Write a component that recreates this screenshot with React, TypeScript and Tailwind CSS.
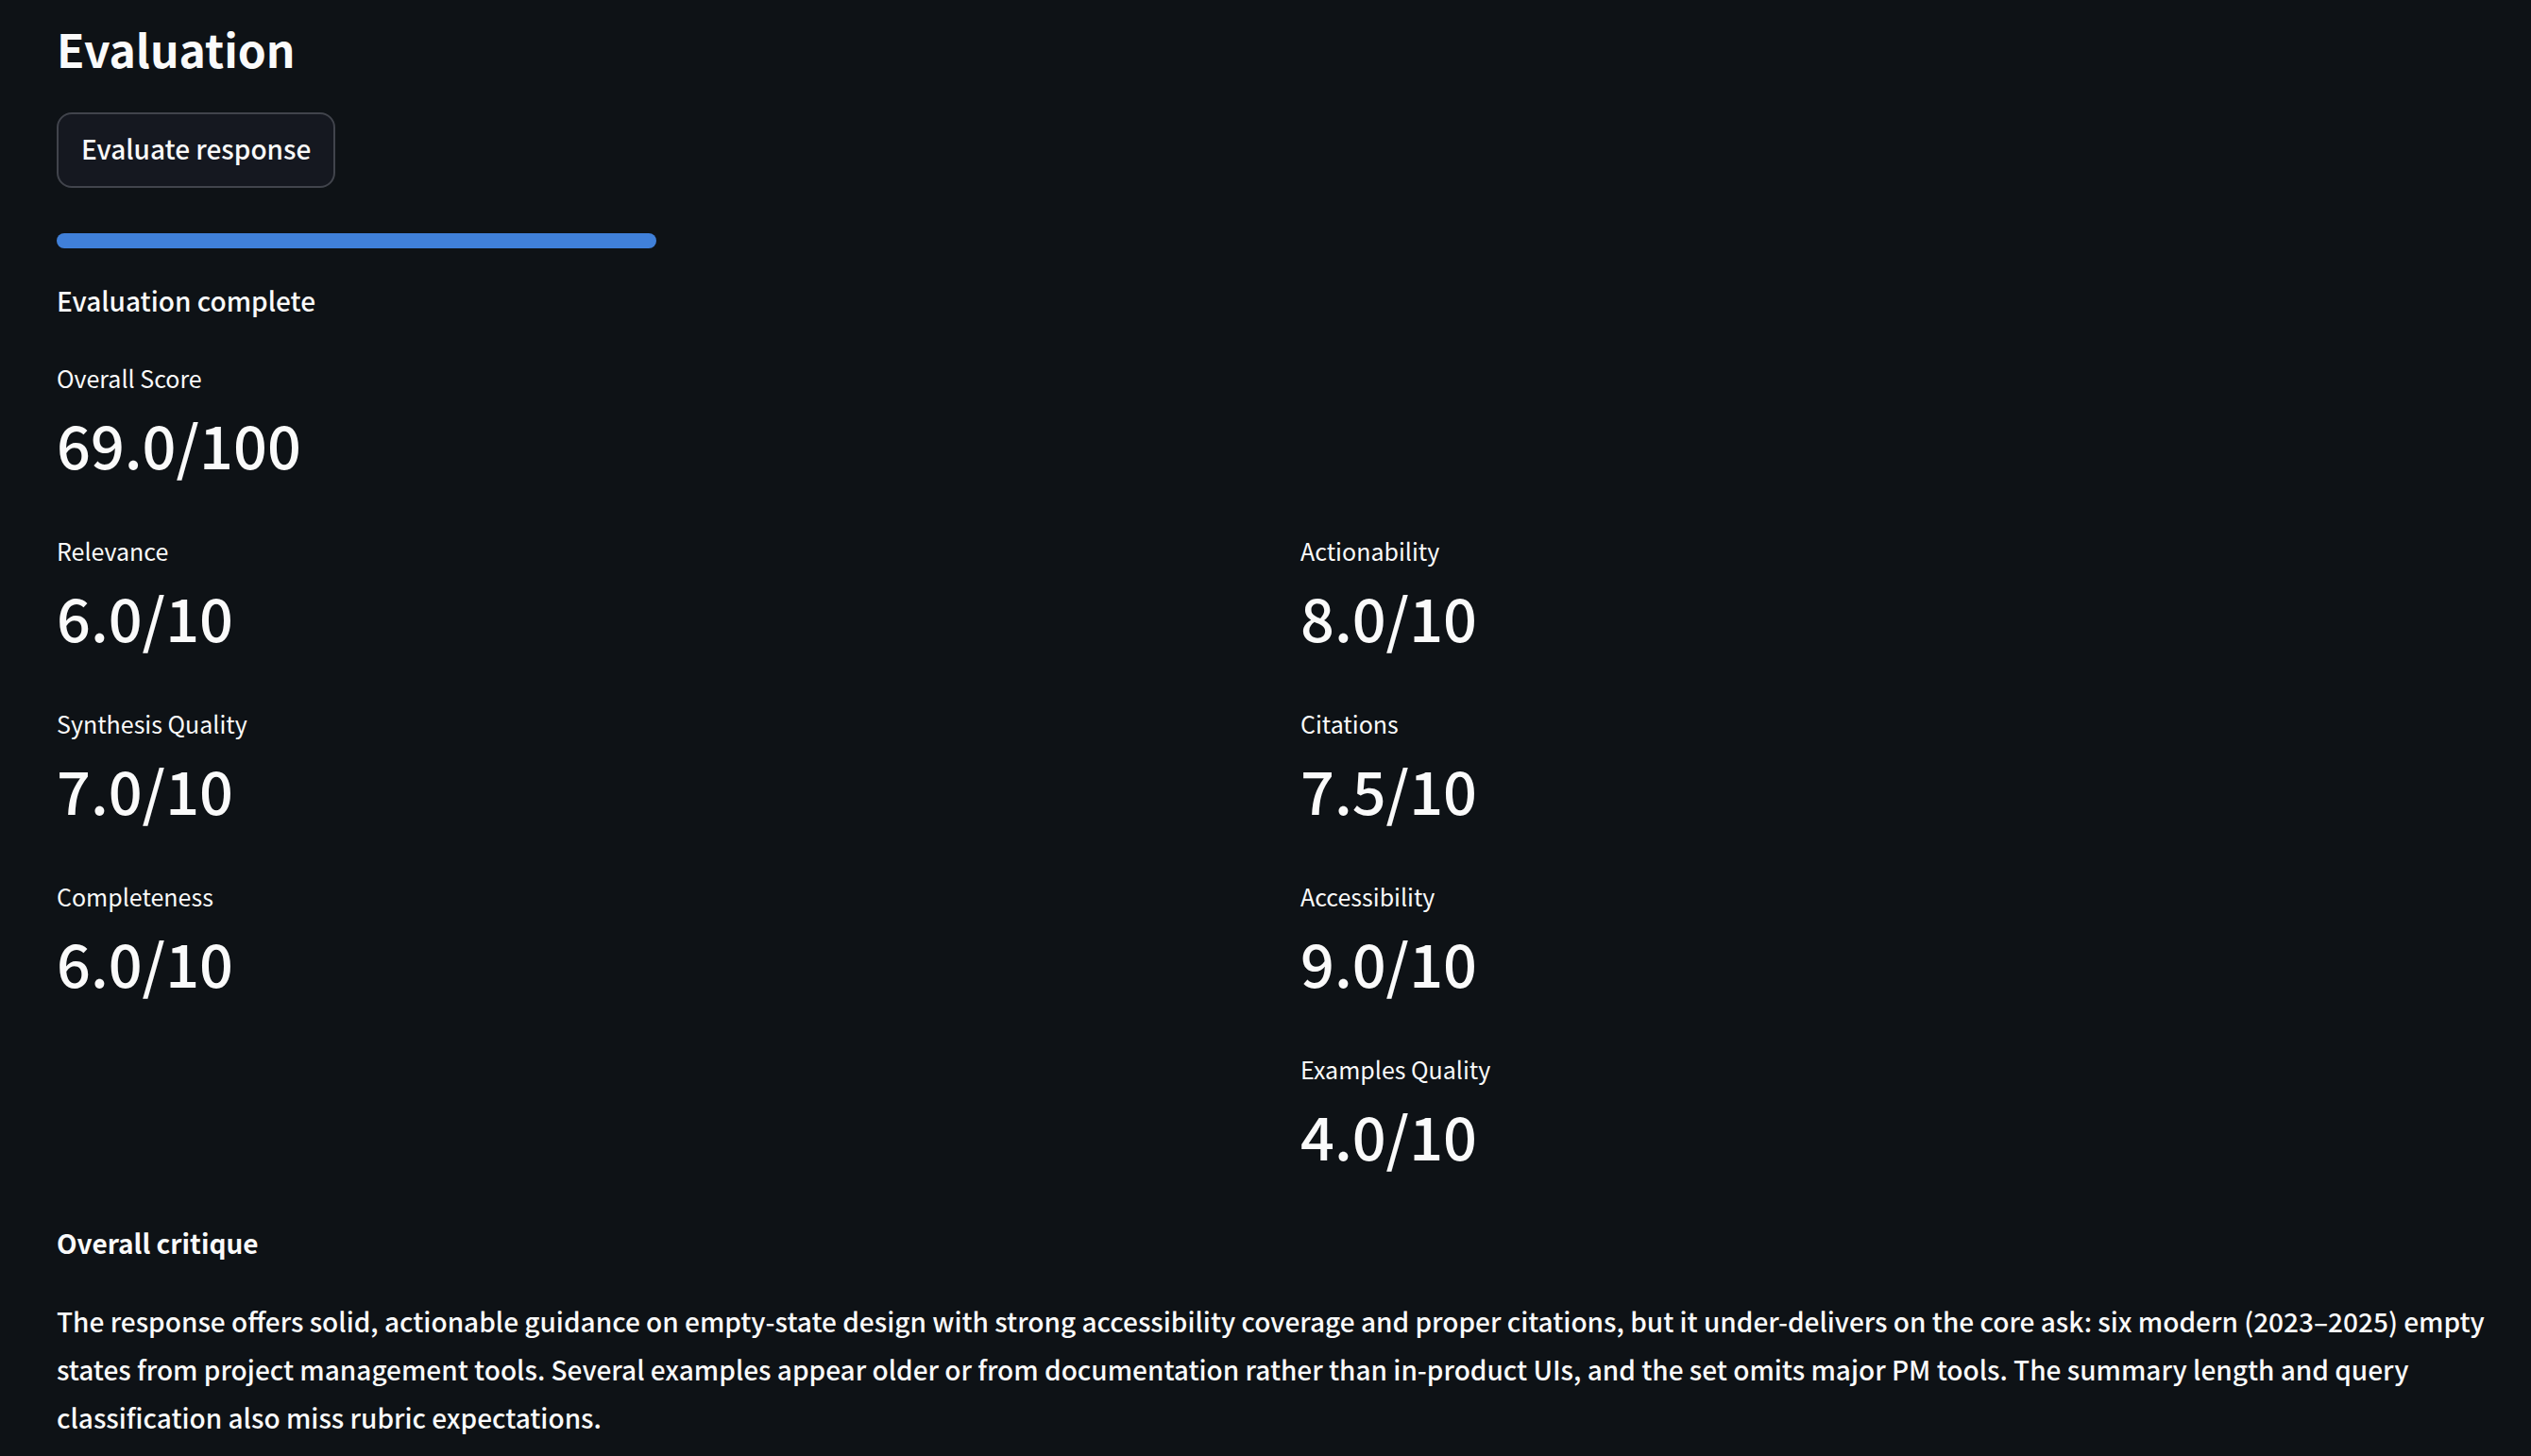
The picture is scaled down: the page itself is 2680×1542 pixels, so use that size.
import React from 'react';

type Score = { label: string; value: string };

const leftScores: Score[] = [
  { label: 'Relevance', value: '6.0/10' },
  { label: 'Synthesis Quality', value: '7.0/10' },
  { label: 'Completeness', value: '6.0/10' },
];

const rightScores: Score[] = [
  { label: 'Actionability', value: '8.0/10' },
  { label: 'Citations', value: '7.5/10' },
  { label: 'Accessibility', value: '9.0/10' },
  { label: 'Examples Quality', value: '4.0/10' },
];

function Metric({ label, value }: Score) {
  return (
    <div className="pb-3">
      <dt className="text-[25px] leading-[45px]">{label}</dt>
      <dd className="text-[63px] font-medium leading-[94px]">{value}</dd>
    </div>
  );
}

export default function App() {
  return (
    <main className="min-h-screen bg-[#0e1216] pl-[60px] pr-[18px] pt-4 font-['Noto_Sans_CJK_SC','Source_Sans_Pro',sans-serif] font-normal text-[#fafafa]">
      <h2 className="text-[48px] font-bold leading-[71px]">Evaluation</h2>
      <button className="mt-8 h-20 rounded-2xl border-2 border-[#41444c] bg-[#151820] px-6 pb-1 text-[28px] font-medium leading-[50px]">
        Evaluate response
      </button>
      <div role="progressbar" aria-label="Evaluation progress" aria-valuenow={100} className="mt-12 h-4 w-[635px] rounded-full bg-[#4080d9]" />
      <p className="mt-[30px] text-[28px] font-medium leading-[51px]">Evaluation complete</p>
      <dl className="mt-[34px]">
        <Metric label="Overall Score" value="69.0/100" />
      </dl>
      <div className="mt-8 grid grid-cols-2 gap-8">
        <dl className="flex flex-col gap-8">
          {leftScores.map((s) => (
            <Metric key={s.label} {...s} />
          ))}
        </dl>
        <dl className="flex flex-col gap-8">
          {rightScores.map((s) => (
            <Metric key={s.label} {...s} />
          ))}
        </dl>
      </div>
      <h3 className="mt-[30px] text-[28px] font-bold leading-[51px]">Overall critique</h3>
      <p className="mt-8 text-[28px] font-medium leading-[51px]">
        The response offers solid, actionable guidance on empty-state design with strong accessibility coverage and proper citations, but it under-delivers on the core ask: six modern (2023–2025) empty states from project management tools. Several examples appear older or from documentation rather than in-product UIs, and the set omits major PM tools. The summary length and query classification also miss rubric expectations.
      </p>
    </main>
  );
}
